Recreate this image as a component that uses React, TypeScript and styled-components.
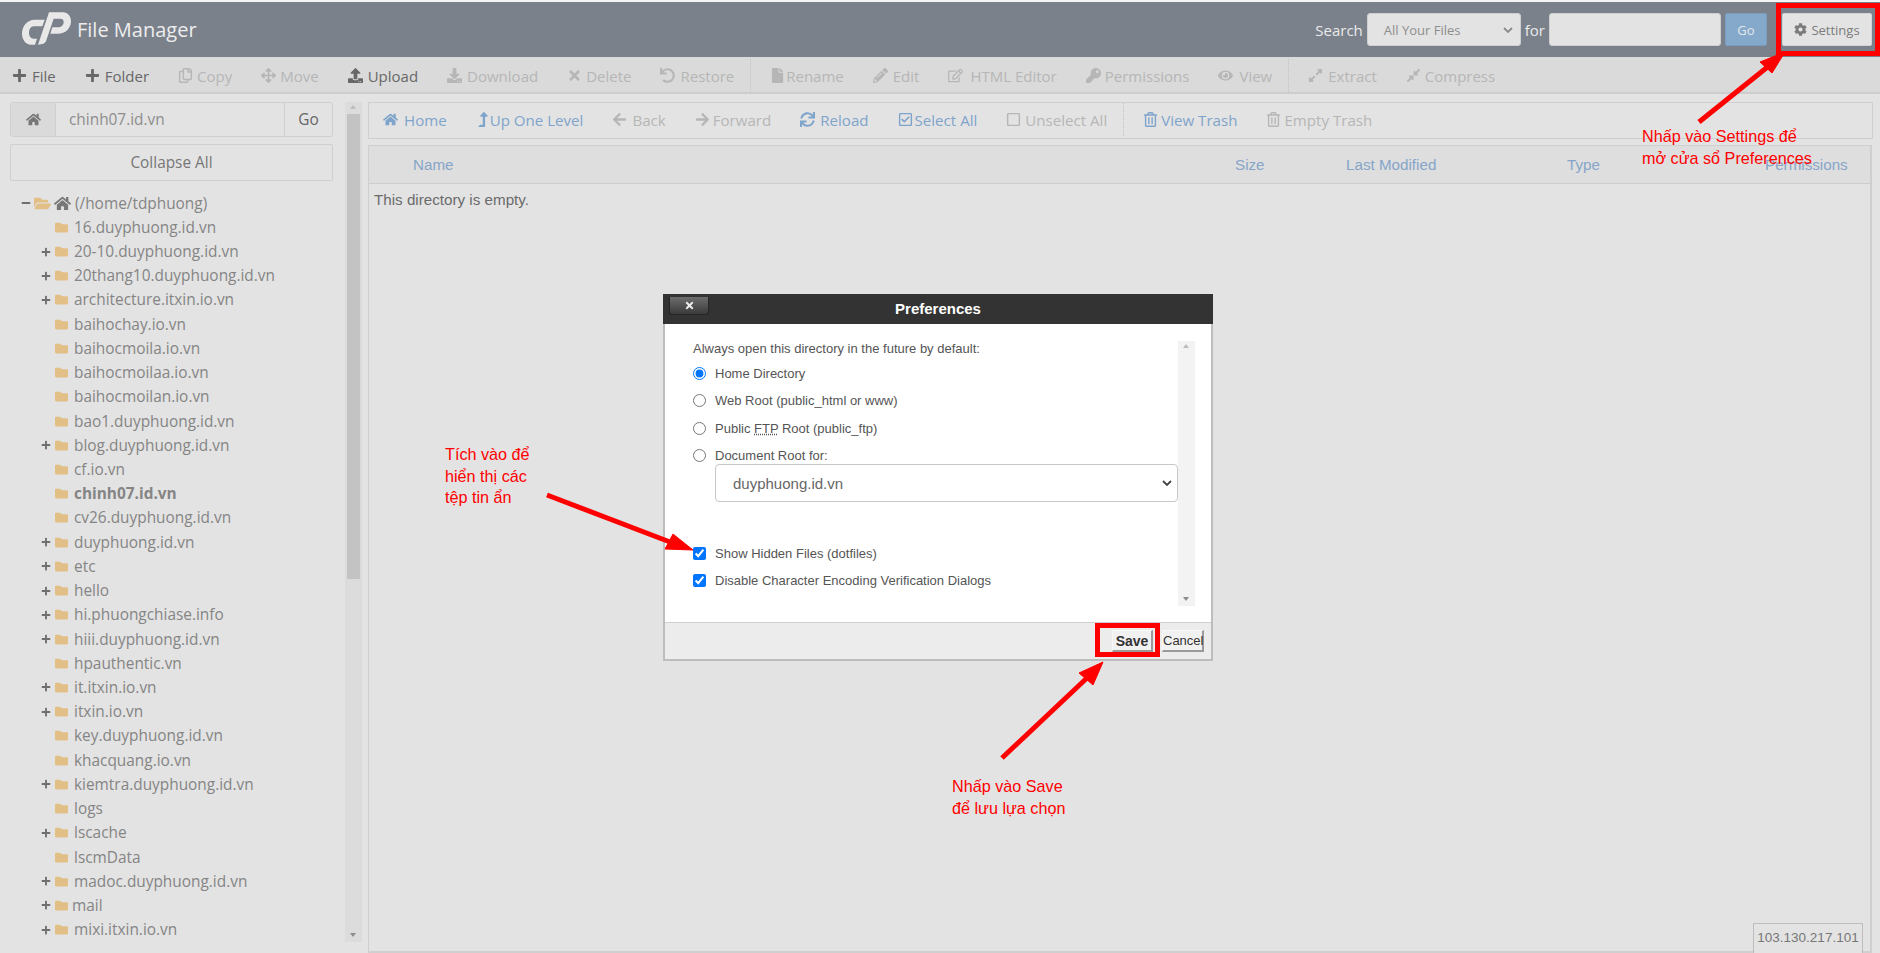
import React from "react";
import styled, { createGlobalStyle } from "styled-components";
import {
  FaPlus, FaRegCopy, FaArrowsAlt, FaUpload, FaDownload, FaTimes, FaUndo, FaFile, FaPencilAlt,
  FaRegEdit, FaKey, FaEye, FaExpandAlt, FaCompressAlt, FaHome, FaLevelUpAlt, FaArrowLeft,
  FaArrowRight, FaSync, FaRegCheckSquare, FaRegSquare, FaRegTrashAlt, FaFolder, FaFolderOpen,
  FaCog, FaMinus,
} from "react-icons/fa";

const Global = createGlobalStyle`
  html, body { margin: 0; padding: 0; width: 1880px; height: 953px; overflow: hidden; background: #e3e3e3; }
  * { box-sizing: border-box; }
  body { font-family: "Open Sans", sans-serif; color: #666; }
`;

const Page = styled.div`
  position: relative;
  width: 1880px;
  height: 953px;
  padding-top: 2px;
  background: #e3e3e3;
  box-shadow: inset 0 2px 0 #f4f4f6;
  overflow: hidden;
`;

const Header = styled.header`
  height: 55px;
  background: #7a818b;
  display: flex;
  align-items: center;
  padding: 0 8px 0 22px;
`;

const Logo = styled.svg`
  flex: none;
  margin-top: -3px;
`;

const Title = styled.div`
  margin-left: 6px;
  font-size: 20px;
  color: #ededed;
`;

const SearchForm = styled.div`
  margin-left: auto;
  display: flex;
  align-items: center;
  font-size: 15px;
  color: #eaeaea;
`;

const FieldBox = styled.div<{ $w: number }>`
  width: ${(p) => p.$w}px;
  height: 33px;
  background: #e3e3e3;
  border: 1px solid #cfcfcf;
  border-radius: 3px;
  margin: 0 4px;
  display: flex;
  align-items: center;
  justify-content: space-between;
  padding: 0 7px 0 16px;
  font-size: 13px;
  color: #8e8e8e;
`;

const GoButton = styled.div`
  width: 42px;
  height: 33px;
  background: #85a9cb;
  border: 1px solid #7a9dbf;
  border-radius: 2px;
  color: #e3e6ea;
  font-size: 13px;
  display: flex;
  align-items: center;
  justify-content: center;
`;

const SettingsButton = styled.div`
  width: 90px;
  height: 33px;
  margin-left: 15px;
  background: #e3e3e3;
  border: 1px solid #d3d3d3;
  border-radius: 2px;
  font-size: 13px;
  color: #7b7b7b;
  display: flex;
  align-items: center;
  justify-content: center;
  gap: 4px;
`;

const TopBar = styled.nav`
  height: 37px;
  background: #dadada;
  border-bottom: 2px solid #cdcdcd;
  display: flex;
  align-items: center;
  padding: 2px 0 0 12px;
  font-size: 15px;
`;

const ItemLink = styled.span<{ $tone: string; $gap: number }>`
  display: inline-flex;
  align-items: center;
  margin-right: ${(p) => p.$gap}px;
  white-space: nowrap;
  color: ${(p) => p.$tone};
`;

const IconSlot = styled.span<{ $w: number }>`
  display: inline-flex;
  align-items: center;
  width: ${(p) => p.$w}px;
  font-size: 15px;
`;

const Divider = styled.span`
  align-self: stretch;
  border-left: 1px dotted #c2c2c2;
  margin: 0 19px 0 -13px;
`;

const Body = styled.div`
  display: flex;
  height: 859px;
`;

const Sidebar = styled.aside`
  width: 345px;
  flex: none;
  padding: 8px 12px 0 10px;
`;

const PathGroup = styled.div`
  height: 35px;
  border: 1px solid #cfcfcf;
  border-radius: 3px;
  display: flex;
  font-size: 15.4px;
`;

const PathHome = styled.div`
  width: 45px;
  background: #dadada;
  border-right: 1px solid #cfcfcf;
  display: flex;
  align-items: center;
  justify-content: center;
  font-size: 15px;
  color: #777;
`;

const PathValue = styled.div`
  flex: 1;
  padding-left: 13px;
  line-height: 33px;
  color: #8d8d8d;
`;

const PathGo = styled.div`
  width: 48px;
  border-left: 1px solid #cfcfcf;
  line-height: 33px;
  text-align: center;
`;

const CollapseButton = styled.div`
  height: 37px;
  margin-top: 7px;
  border: 1px solid #cfcfcf;
  border-radius: 2px;
  text-align: center;
  line-height: 35px;
  font-size: 15.4px;
  color: #777;
`;

const Tree = styled.ul`
  list-style: none;
  margin: 10px 0 0;
  padding: 0;
`;

const TreeRow = styled.li<{ $bold?: boolean }>`
  height: 24.22px;
  display: flex;
  align-items: center;
  font-size: 15.4px;
  color: #858585;
  font-weight: ${(p) => (p.$bold ? 700 : 400)};
`;

const Expander = styled.span<{ $left: number }>`
  width: 13px;
  margin-left: ${(p) => p.$left}px;
  display: inline-flex;
  font-size: 10px;
  color: #6f6f6f;
`;

const FolderIcon = styled(FaFolder)`
  width: 15px;
  height: 13px;
  color: #e2bf87;
  flex: none;
`;

const RootIcons = styled.span`
  display: inline-flex;
  align-items: center;
  gap: 3px;
  width: 41px;
  font-size: 17px;
  color: #777;
`;

const RowLabel = styled.span<{ $tight?: boolean }>`
  margin-left: ${(p) => (p.$tight ? 3 : 5)}px;
`;

const ScrollTrack = styled.div`
  width: 17px;
  flex: none;
  margin-top: 8px;
  height: 840px;
  background: #dcdcdc;
  position: relative;
`;

const ScrollThumb = styled.div`
  position: absolute;
  left: 2px;
  right: 2px;
  top: 12px;
  height: 465px;
  background: #c3c3c3;
`;

const ScrollArrow = styled.div<{ $down?: boolean }>`
  position: absolute;
  left: 5px;
  ${(p) => (p.$down ? "bottom: 5px;" : "top: 3px;")}
  border-left: 3.5px solid transparent;
  border-right: 3.5px solid transparent;
  ${(p) => (p.$down ? "border-top: 4px solid #8d8d8d;" : "border-bottom: 4px solid #bdbdbd;")}
`;

const Main = styled.main`
  width: 1506px;
  flex: none;
  margin-left: 6px;
  padding-top: 8px;
  display: flex;
  flex-direction: column;
`;

const ActionBar = styled.div`
  height: 37px;
  border: 1px solid #cfcfcf;
  margin-right: 1px;
  display: flex;
  align-items: center;
  padding: 0 0 2px 14px;
  font-size: 15.1px;
`;

const FilePane = styled.div`
  flex: 1;
  margin-top: 6px;
  border: 1px solid #cfcfcf;
  border-width: 1px 2px 2px 1px;
  margin-right: 2px;
`;

const TableHead = styled.div`
  height: 38px;
  background: #dedede;
  border-bottom: 1px solid #cdcdcd;
  display: grid;
  grid-template-columns: 822px 111px 221px 198px 1fr;
  align-items: center;
  padding-left: 44px;
  font-family: "Liberation Sans", sans-serif;
  font-size: 15.2px;
  color: #86a5c9;
`;

const EmptyNote = styled.div`
  padding: 7px 0 0 5px;
  font-family: "Liberation Sans", sans-serif;
  font-size: 15.2px;
  color: #6b6b6b;
`;

const IpBadge = styled.div`
  position: absolute;
  left: 1753px;
  top: 923px;
  width: 110px;
  height: 30px;
  background: #e3e3e3;
  border: 1px solid #bdbdbd;
  border-bottom: 0;
  text-align: center;
  line-height: 28px;
  font-family: "Liberation Sans", sans-serif;
  font-size: 13.5px;
  color: #777;
`;

const Dialog = styled.section`
  position: absolute;
  left: 663px;
  top: 294px;
  width: 550px;
  height: 367px;
  background: #ececec;
  border: 2px solid #bdbdbd;
  border-top: 0;
  display: flex;
  flex-direction: column;
  font-family: "Liberation Sans", sans-serif;
`;

const DialogTitle = styled.div`
  position: relative;
  height: 30px;
  margin: 0 -2px;
  background: #333;
  color: #fff;
  font-weight: 700;
  font-size: 15px;
  text-align: center;
  line-height: 30px;
`;

const CloseBox = styled.div`
  position: absolute;
  left: 6px;
  top: 3px;
  width: 40px;
  height: 18px;
  background: linear-gradient(#6d6d6d, #3a3a3a);
  border: 1px solid #262626;
  border-top: 0;
  border-radius: 0 0 3px 3px;
  color: #eee;
  font-size: 11px;
  display: flex;
  align-items: center;
  justify-content: center;
`;

const DialogBody = styled.div`
  flex: 1;
  background: #fff;
  border-bottom: 1px solid #cfcfcf;
  padding: 17px 16px 0 28px;
  display: flex;
`;

const DialogForm = styled.div`
  width: 485px;
  font-size: 13px;
  color: #555;
`;

const FormLine = styled.label<{ $h: number; $top?: number }>`
  height: ${(p) => p.$h}px;
  margin-top: ${(p) => p.$top ?? 0}px;
  display: flex;
  align-items: center;
  gap: 9px;
  white-space: nowrap;
`;

const Mark = styled.input`
  margin: 0;
  width: 13px;
  height: 13px;
  flex: none;
  accent-color: #0075ff;
`;

const Select = styled.div`
  height: 38px;
  margin: -5px 0 0 22px;
  background: #fff;
  border: 1px solid #c8c8c8;
  border-radius: 4px;
  padding: 0 5px 0 17px;
  display: flex;
  align-items: center;
  justify-content: space-between;
  font-size: 15px;
  color: #666;
`;

const Chevron = ({ color }: { color: string }) => (
  <svg width="10" height="6" viewBox="0 0 10 6">
    <path d="M1 1l4 4 4-4" fill="none" stroke={color} strokeWidth="1.8" />
  </svg>
);

const FormScroll = styled.div`
  width: 17px;
  height: 265px;
  background: #f3f3f3;
  position: relative;
`;

const DialogFoot = styled.div`
  height: 36px;
  flex: none;
  display: flex;
  justify-content: flex-end;
  align-items: center;
  padding-right: 7px;
  gap: 9px;
  font-size: 13px;
`;

const FootButton = styled.div<{ $bold?: boolean; $w: number }>`
  width: ${(p) => p.$w}px;
  height: 22px;
  background: #f1f1f1;
  border: 1px solid #f8f8f8;
  border-right: 2px solid #9a9a9a;
  border-bottom: 2px solid #9a9a9a;
  font-weight: ${(p) => (p.$bold ? 700 : 400)};
  font-size: ${(p) => (p.$bold ? 14 : 13)}px;
  color: #333;
  text-align: center;
  line-height: 20px;
`;

const Note = styled.div<{ $x: number; $y: number }>`
  position: absolute;
  left: ${(p) => p.$x}px;
  top: ${(p) => p.$y}px;
  color: #f00;
  font-family: "Liberation Sans", sans-serif;
  font-size: 16.2px;
  line-height: 21.5px;
  white-space: nowrap;
`;

const RedFrame = styled.div<{ $x: number; $y: number; $w: number; $h: number }>`
  position: absolute;
  left: ${(p) => p.$x}px;
  top: ${(p) => p.$y}px;
  width: ${(p) => p.$w}px;
  height: ${(p) => p.$h}px;
  border: 5px solid #f00;
`;

const ArrowLayer = styled.svg`
  position: absolute;
  left: 0;
  top: 0;
  pointer-events: none;
`;

const CpLogo = () => (
  <Logo width="49" height="33" viewBox="37 28 147 97">
    <path d="M105 50L98 70H72C63 70 58 80 58 90C58 100 64 107 72 107H82L76 125H65C47 125 37 108 37 92C37 70 52 50 75 50Z" fill="#e8e8e8" />
    <path d="M118 28H160C175 28 184 40 184 55C184 75 168 92 148 92H122L128 73H146C156 73 162 65 162 57C162 50 158 47 152 47H132L110 112C107 122 98 125 85 125Z" fill="#e8e8e8" />
  </Logo>
);

const grey = "#686868";
const off = "#b6b6b6";
const blue = "#7fa4cb";

type Action = { icon: React.ReactNode; label: string; tone: string; w: number };

const topItems: (Action | "sep")[] = [
  { icon: <FaPlus />, label: "File", tone: grey, w: 20 },
  { icon: <FaPlus />, label: "Folder", tone: grey, w: 20 },
  { icon: <FaRegCopy />, label: "Copy", tone: off, w: 19 },
  { icon: <FaArrowsAlt />, label: "Move", tone: off, w: 19 },
  { icon: <FaUpload />, label: "Upload", tone: grey, w: 20 },
  { icon: <FaDownload />, label: "Download", tone: off, w: 20 },
  { icon: <FaTimes />, label: "Delete", tone: off, w: 19 },
  { icon: <FaUndo />, label: "Restore", tone: off, w: 20 },
  "sep",
  { icon: <FaFile />, label: "Rename", tone: off, w: 16 },
  { icon: <FaPencilAlt />, label: "Edit", tone: off, w: 20 },
  { icon: <FaRegEdit />, label: "HTML Editor", tone: off, w: 22 },
  { icon: <FaKey />, label: "Permissions", tone: off, w: 19 },
  { icon: <FaEye />, label: "View", tone: off, w: 21 },
  "sep",
  { icon: <FaExpandAlt />, label: "Extract", tone: off, w: 20 },
  { icon: <FaCompressAlt />, label: "Compress", tone: off, w: 19 },
];

const actionItems: (Action | "sep")[] = [
  { icon: <FaHome />, label: "Home", tone: blue, w: 21 },
  { icon: <FaLevelUpAlt />, label: "Up One Level", tone: blue, w: 14 },
  { icon: <FaArrowLeft />, label: "Back", tone: off, w: 20 },
  { icon: <FaArrowRight />, label: "Forward", tone: off, w: 18 },
  { icon: <FaSync />, label: "Reload", tone: blue, w: 20 },
  { icon: <FaRegCheckSquare />, label: "Select All", tone: blue, w: 17 },
  { icon: <FaRegSquare />, label: "Unselect All", tone: off, w: 19 },
  "sep",
  { icon: <FaRegTrashAlt />, label: "View Trash", tone: blue, w: 18 },
  { icon: <FaRegTrashAlt />, label: "Empty Trash", tone: off, w: 18 },
];

const folders: [string, boolean][] = [
  ["16.duyphuong.id.vn", false],
  ["20-10.duyphuong.id.vn", true],
  ["20thang10.duyphuong.id.vn", true],
  ["architecture.itxin.io.vn", true],
  ["baihochay.io.vn", false],
  ["baihocmoila.io.vn", false],
  ["baihocmoilaa.io.vn", false],
  ["baihocmoilan.io.vn", false],
  ["bao1.duyphuong.id.vn", false],
  ["blog.duyphuong.id.vn", true],
  ["cf.io.vn", false],
  ["chinh07.id.vn", false],
  ["cv26.duyphuong.id.vn", false],
  ["duyphuong.id.vn", true],
  ["etc", true],
  ["hello", true],
  ["hi.phuongchiase.info", true],
  ["hiii.duyphuong.id.vn", true],
  ["hpauthentic.vn", false],
  ["it.itxin.io.vn", true],
  ["itxin.io.vn", true],
  ["key.duyphuong.id.vn", false],
  ["khacquang.io.vn", false],
  ["kiemtra.duyphuong.id.vn", true],
  ["logs", false],
  ["lscache", true],
  ["lscmData", false],
  ["madoc.duyphuong.id.vn", true],
  ["mail", true],
  ["mixi.itxin.io.vn", true],
];

const renderItems = (items: (Action | "sep")[], gap: number) =>
  items.map((item, i) =>
    item === "sep" ? (
      <Divider key={i} />
    ) : (
      <ItemLink key={item.label} $tone={item.tone} $gap={gap}>
        <IconSlot $w={item.w}>{item.icon}</IconSlot>
        {item.label}
      </ItemLink>
    )
  );

export default function App() {
  return (
    <Page>
      <Global />
      <Header>
        <CpLogo />
        <Title>File Manager</Title>
        <SearchForm>
          Search
          <FieldBox $w={154}>
            All Your Files
            <Chevron color="#8a8a8a" />
          </FieldBox>
          for
          <FieldBox $w={172} />
          <GoButton>Go</GoButton>
          <SettingsButton>
            <FaCog />
            Settings
          </SettingsButton>
        </SearchForm>
      </Header>
      <TopBar>{renderItems(topItems, 29)}</TopBar>
      <Body>
        <Sidebar>
          <PathGroup>
            <PathHome>
              <FaHome />
            </PathHome>
            <PathValue>chinh07.id.vn</PathValue>
            <PathGo>Go</PathGo>
          </PathGroup>
          <CollapseButton>Collapse All</CollapseButton>
          <Tree>
            <TreeRow>
              <Expander $left={11}>
                <FaMinus />
              </Expander>
              <RootIcons>
                <FaFolderOpen color="#e2bf87" />
                <FaHome />
              </RootIcons>
              (/home/tdphuong)
            </TreeRow>
            {folders.map(([name, expandable]) => (
              <TreeRow key={name} $bold={name === "chinh07.id.vn"}>
                <Expander $left={31}>{expandable && <FaPlus />}</Expander>
                <FolderIcon />
                <RowLabel $tight={name === "mail"}>{name}</RowLabel>
              </TreeRow>
            ))}
          </Tree>
        </Sidebar>
        <ScrollTrack>
          <ScrollArrow />
          <ScrollThumb />
          <ScrollArrow $down />
        </ScrollTrack>
        <Main>
          <ActionBar>{renderItems(actionItems, 29)}</ActionBar>
          <FilePane>
            <TableHead>
              <span>Name</span>
              <span>Size</span>
              <span>Last Modified</span>
              <span>Type</span>
              <span>Permissions</span>
            </TableHead>
            <EmptyNote>This directory is empty.</EmptyNote>
          </FilePane>
        </Main>
      </Body>
      <IpBadge>103.130.217.101</IpBadge>
      <Dialog>
        <DialogTitle>
          <CloseBox>
            <FaTimes />
          </CloseBox>
          Preferences
        </DialogTitle>
        <DialogBody>
          <DialogForm>
            <FormLine $h={14}>Always open this directory in the future by default:</FormLine>
            <FormLine $h={27} $top={5}>
              <Mark type="radio" name="home" defaultChecked />
              Home Directory
            </FormLine>
            <FormLine $h={27}>
              <Mark type="radio" name="home" />
              Web Root (public_html or www)
            </FormLine>
            <FormLine $h={28}>
              <Mark type="radio" name="home" />
              <span>
                Public <abbr title="File Transfer Protocol">FTP</abbr> Root (public_ftp)
              </span>
            </FormLine>
            <FormLine $h={27}>
              <Mark type="radio" name="home" />
              Document Root for:
            </FormLine>
            <Select>
              duyphuong.id.vn
              <Chevron color="#444" />
            </Select>
            <FormLine $h={27} $top={38}>
              <Mark type="checkbox" defaultChecked />
              Show Hidden Files (dotfiles)
            </FormLine>
            <FormLine $h={27}>
              <Mark type="checkbox" defaultChecked />
              Disable Character Encoding Verification Dialogs
            </FormLine>
          </DialogForm>
          <FormScroll>
            <ScrollArrow />
            <ScrollArrow $down />
          </FormScroll>
        </DialogBody>
        <DialogFoot>
          <FootButton $bold $w={41}>Save</FootButton>
          <FootButton $w={42}>Cancel</FootButton>
        </DialogFoot>
      </Dialog>

      <RedFrame $x={1776} $y={3} $w={104} $h={53} />
      <RedFrame $x={1095} $y={623} $w={65} $h={34} />
      <ArrowLayer width="1880" height="953" viewBox="0 0 1880 953">
        <g fill="#f00" stroke="#f00">
          <path d="M1699 122L1770 65" strokeWidth="5" />
          <path d="M1785 52L1772 73 1760 62z" />
          <path d="M547 495L670 542" strokeWidth="5" />
          <path d="M693 550L665 549 673 534z" />
          <path d="M1002 758L1088 677" strokeWidth="5" />
          <path d="M1103 662L1093 685 1079 673z" />
        </g>
      </ArrowLayer>
      <Note $x={1642} $y={126}>
        Nhấp vào Settings để
        <br />
        mở cửa sổ Preferences
      </Note>
      <Note $x={445} $y={444}>
        Tích vào để
        <br />
        hiển thị các
        <br />
        tệp tin ẩn
      </Note>
      <Note $x={952} $y={776}>
        Nhấp vào Save
        <br />
        để lưu lựa chọn
      </Note>
    </Page>
  );
}
